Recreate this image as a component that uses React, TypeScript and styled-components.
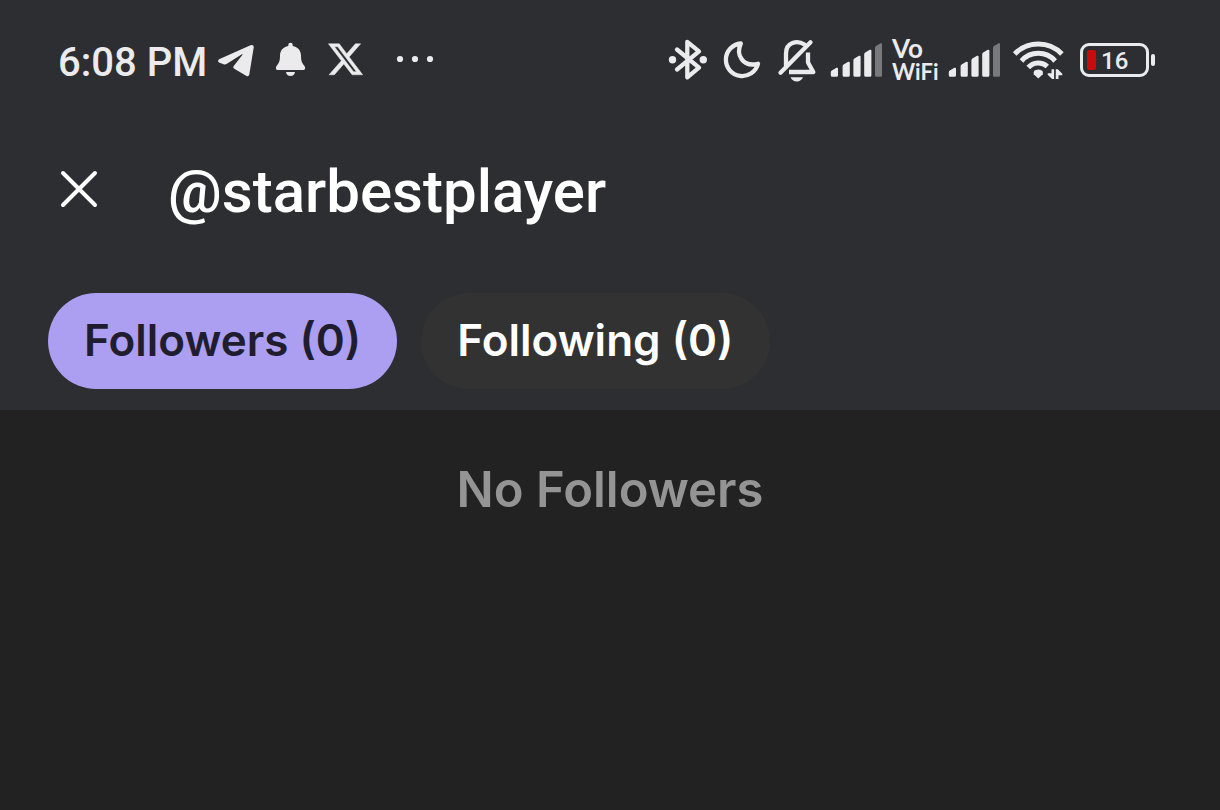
import React, { useState } from "react";
import styled, { createGlobalStyle } from "styled-components";

const GlobalStyle = createGlobalStyle`
  *, *::before, *::after { box-sizing: border-box; }
  body {
    margin: 0;
    background: #222222;
    font-family: Inter, "Liberation Sans", sans-serif;
  }
`;

const Page = styled.div`
  display: flex;
  flex-direction: column;
  min-height: 100vh;
  background: #222222;
`;

const Top = styled.header`
  display: flex;
  flex-direction: column;
  padding-bottom: 21px;
  background: #2d2e32;
`;

const StatusBar = styled.div`
  display: flex;
  align-items: center;
  justify-content: space-between;
  height: 120px;
  padding: 0 64px 0 58px;
  color: #ebebed;
`;

const StatusGroup = styled.div<{ $gap: number }>`
  display: flex;
  align-items: center;
  gap: ${(p) => p.$gap}px;
`;

const Clock = styled.time`
  margin-right: -11px;
  padding-top: 6px;
  font: 500 40px/48px Roboto, sans-serif;
  white-space: nowrap;
`;

const Glyph = styled.svg`
  display: block;
  flex: none;
  height: 44px;
  fill: currentColor;
`;

const CallLabel = styled.div`
  display: flex;
  flex-direction: column;
  width: 46px;
  white-space: nowrap;
`;

const CallLine = styled.span<{ $size: number }>`
  font: 700 ${(p) => p.$size}px/23px Lato, sans-serif;
`;

const Battery = styled.div`
  display: flex;
  align-items: center;
  gap: 2px;
  width: 80px;
  padding-left: 4px;
`;

const BatteryShell = styled.div`
  display: flex;
  align-items: center;
  gap: 5px;
  width: 69px;
  height: 34px;
  padding-left: 4px;
  border: 3px solid currentColor;
  border-radius: 9px;
  font: 500 24px/26px Roboto, sans-serif;
`;

const BatteryLevel = styled.span`
  width: 9px;
  height: 20px;
  border-radius: 2px;
  background: #c90b0b;
`;

const BatteryValue = styled.span`
  padding-top: 2px;
`;

const BatteryTip = styled.span`
  width: 4px;
  height: 12px;
  border-radius: 2px;
  background: currentColor;
`;

const TitleBar = styled.div`
  display: flex;
  align-items: center;
  gap: 59px;
  height: 138px;
  padding: 0 49px;
`;

const CloseButton = styled.button`
  display: grid;
  place-items: center;
  width: 60px;
  height: 60px;
  padding: 0;
  border: 0;
  background: none;
  color: #ffffff;
  cursor: pointer;
`;

const Title = styled.h1`
  margin: 0;
  padding-top: 6px;
  color: #ffffff;
  font: 500 60px/72px Roboto, sans-serif;
`;

const Tabs = styled.div`
  display: flex;
  gap: 24px;
  padding: 35px 48px 0;
`;

const Tab = styled.button<{ $active: boolean }>`
  height: 96px;
  padding: 0 36px 2px;
  border: 0;
  border-radius: 48px;
  background: ${(p) => (p.$active ? "#ac9ff1" : "#323232")};
  color: ${(p) => (p.$active ? "#201d2e" : "#ffffff")};
  font: 600 44px/54px Inter, sans-serif;
  white-space: nowrap;
  cursor: pointer;
`;

const Content = styled.main`
  flex: 1;
  padding: 48px;
`;

const EmptyMessage = styled.p`
  margin: 0;
  color: #949494;
  font: 600 49px/64px Inter, sans-serif;
  text-align: center;
`;

const TelegramIcon = () => (
  <Glyph width="36" viewBox="0 0 36 44" aria-hidden="true">
    <path d="M1 21.2 32.500 7.200q3.600-1 3.200 2.300L31.300 36.500q-.6 2.300-2.800 1.400L16.300 30.800q-1.900-1.300-.4-3L24.500 16.800q.4-.9-.6-.5L8.500 26q-1.400.8-2.900.3L1 24.400q-1.900-1.300 0-3.200z" />
  </Glyph>
);

const BellIcon = () => (
  <Glyph width="30" viewBox="0 0 30 44" aria-hidden="true">
    <path d="M12.300 6.800q0-2 2.200-2t2.200 2v1.100C22 9 25 12.500 25 17.500c0 5.500 1 7.500 3.300 10.200 1.200 1.500 1.300 4.300-.8 4.300h-26c-2.100 0-2-2.800-.8-4.300C3 25 4 23 4 17.500 4 12.500 7 9 12.300 7.900z" />
    <path d="M10 34h9c-.4 2.700-2 4-4.500 4s-4.100-1.300-4.500-4z" />
  </Glyph>
);

const XIcon = () => (
  <Glyph width="36" viewBox="0 0 36 44" aria-hidden="true">
    <path
      transform="translate(-1.600 2.200) scale(1.590)"
      stroke="currentColor"
      strokeWidth=".3"
      d="M18.244 2.250h3.308l-7.227 8.260 8.502 11.240H16.170l-5.214-6.817L4.990 21.750H1.680l7.730-8.835L1.254 2.250H8.080l4.713 6.231zm-1.161 17.520h1.833L7.084 4.126H5.117z"
    />
  </Glyph>
);

const MoreIcon = () => (
  <Glyph width="50" viewBox="0 0 50 44" aria-hidden="true">
    <circle cx="14" cy="21" r="3.100" />
    <circle cx="29" cy="21" r="3.100" />
    <circle cx="44" cy="21" r="3.100" />
  </Glyph>
);

const line = {
  fill: "none",
  stroke: "currentColor",
  strokeWidth: 4.3,
  strokeLinecap: "round",
  strokeLinejoin: "round",
} as const;

const BluetoothIcon = () => (
  <Glyph width="44" viewBox="0 0 44 44" aria-label="Bluetooth" role="img">
    <path {...line} d="M11 11.500 33 29.700 21.300 39.300V3.800L33 13.300 11 31.500" />
    <circle cx="6.500" cy="21.700" r="3.700" />
    <circle cx="37.300" cy="21.700" r="3.700" />
  </Glyph>
);

const MoonIcon = () => (
  <Glyph width="46" viewBox="0 0 46 44" aria-label="Do not disturb" role="img">
    <path {...line} d="M20.800 5.500C15.500 17 23 29.500 38 25.800A16.300 16.300 0 1 1 20.800 5.500z" />
  </Glyph>
);

const MutedIcon = () => (
  <Glyph width="44" viewBox="0 0 44 44" aria-label="Muted" role="img">
    <path {...line} d="M4.500 34.800 34.500 4.300M10 27.500V15.500C10 4.500 21 1.800 28.500 6.500" />
    <path {...line} strokeLinecap="butt" d="M32 14.500V24.500L37.300 34H13" />
    <path d="M14.500 39.200h12.500c-1 2.700-3.300 4.200-6.200 4.200s-5.300-1.500-6.300-4.200z" />
  </Glyph>
);

const SIGNAL_BARS = [
  { x: 0.8, top: 30 },
  { x: 12.6, top: 24 },
  { x: 23.4, top: 18 },
  { x: 34.2, top: 12 },
  { x: 45, top: 5.5 },
];

const SignalIcon = () => (
  <Glyph width="52" viewBox="0 0 52 44" aria-label="Signal" role="img">
    {SIGNAL_BARS.map(({ x, top }, i) => (
      <path
        key={x}
        d={`M${x} ${top + 4.3}q0-1.200 1-1.800l4.600-2.700q1.600-.6 1.600 1V37.200q0 1.500-1.500 1.500h-4.200q-1.500 0-1.500-1.500z`}
        fill={i === SIGNAL_BARS.length - 1 ? "#78797c" : undefined}
      />
    ))}
  </Glyph>
);

const WifiIcon = () => (
  <Glyph width="56" viewBox="0 0 56 44" aria-label="Wi-Fi" role="img">
    <g fill="none" stroke="currentColor" strokeWidth="5">
      <path d="M4.700 16A33 33 0 0 1 51.900 16" />
      <path d="M11.500 23A22.300 22.300 0 0 1 45.100 23" />
      <path d="M18.300 29.500A13.300 13.300 0 0 1 37.300 28.500" />
    </g>
    <path d="M28.300 40.500 23.800 36.200q-1.200-4.300 4.500-4.600 5.700.3 4.500 4.600z" />
    <path d="M41.500 31.300h2.600V41h-2L37.700 36.700v-1.500h3.800zM45.800 41V31.300h2L52.300 35.700v1.500h-3.800V41z" />
  </Glyph>
);

const CloseIcon = () => (
  <svg width="38" height="38" viewBox="0 0 38 38" aria-hidden="true">
    <path
      d="M3 3 35 35M35 3 3 35"
      fill="none"
      stroke="currentColor"
      strokeWidth="4"
      strokeLinecap="round"
    />
  </svg>
);

const LISTS = [
  { label: "Followers", count: 0 },
  { label: "Following", count: 0 },
];

export default function App() {
  const [active, setActive] = useState(0);

  return (
    <Page>
      <GlobalStyle />
      <Top>
        <StatusBar>
          <StatusGroup $gap={22}>
            <Clock>6:08 PM</Clock>
            <TelegramIcon />
            <BellIcon />
            <XIcon />
            <MoreIcon />
          </StatusGroup>
          <StatusGroup $gap={10}>
            <BluetoothIcon />
            <MoonIcon />
            <MutedIcon />
            <SignalIcon />
            <CallLabel>
              <CallLine $size={26}>Vo</CallLine>
              <CallLine $size={22}>WiFi</CallLine>
            </CallLabel>
            <SignalIcon />
            <WifiIcon />
            <Battery>
              <BatteryShell>
                <BatteryLevel />
                <BatteryValue>16</BatteryValue>
              </BatteryShell>
              <BatteryTip />
            </Battery>
          </StatusGroup>
        </StatusBar>
        <TitleBar>
          <CloseButton type="button" aria-label="Close">
            <CloseIcon />
          </CloseButton>
          <Title>@starbestplayer</Title>
        </TitleBar>
        <Tabs role="tablist">
          {LISTS.map(({ label, count }, i) => (
            <Tab
              key={label}
              type="button"
              role="tab"
              aria-selected={i === active}
              $active={i === active}
              onClick={() => setActive(i)}
            >
              {label} ({count})
            </Tab>
          ))}
        </Tabs>
      </Top>
      <Content>
        <EmptyMessage>No {LISTS[active].label}</EmptyMessage>
      </Content>
    </Page>
  );
}
